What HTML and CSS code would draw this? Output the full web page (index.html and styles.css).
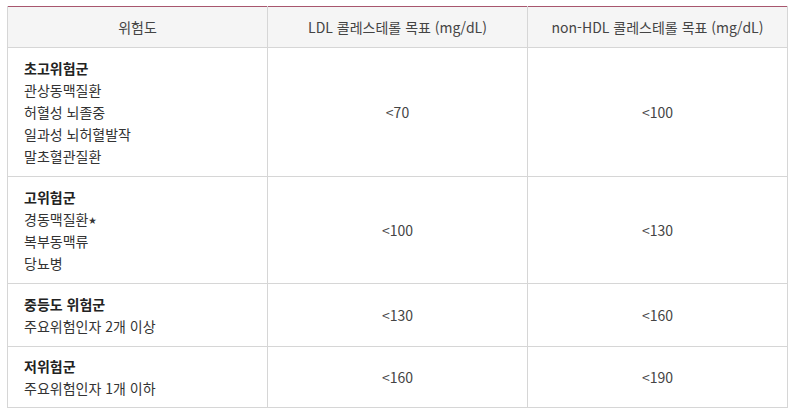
FILE: index.html
```html
<!DOCTYPE html>
<html lang="ko">
<head>
<meta charset="utf-8">
<link rel="stylesheet" href="styles.css">
</head>
<body>
<table class="risk-table">
  <thead>
    <tr>
      <th>위험도</th>
      <th>LDL 콜레스테롤 목표 (mg/dL)</th>
      <th>non-HDL 콜레스테롤 목표 (mg/dL)</th>
    </tr>
  </thead>
  <tbody>
    <tr>
      <td class="label">
        <div class="ln title">초고위험군</div>
        <div class="ln">관상동맥질환</div>
        <div class="ln">허혈성 뇌졸중</div>
        <div class="ln">일과성 뇌허혈발작</div>
        <div class="ln">말초혈관질환</div>
      </td>
      <td class="val">&lt;70</td>
      <td class="val">&lt;100</td>
    </tr>
    <tr>
      <td class="label">
        <div class="ln title">고위험군</div>
        <div class="ln">경동맥질환<span class="star">★</span></div>
        <div class="ln">복부동맥류</div>
        <div class="ln">당뇨병</div>
      </td>
      <td class="val">&lt;100</td>
      <td class="val">&lt;130</td>
    </tr>
    <tr>
      <td class="label">
        <div class="ln title">중등도 위험군</div>
        <div class="ln">주요위험인자 2개 이상</div>
      </td>
      <td class="val">&lt;130</td>
      <td class="val">&lt;160</td>
    </tr>
    <tr class="last">
      <td class="label">
        <div class="ln title">저위험군</div>
        <div class="ln">주요위험인자 1개 이하</div>
      </td>
      <td class="val">&lt;160</td>
      <td class="val">&lt;190</td>
    </tr>
  </tbody>
</table>
</body>
</html>
```

FILE: styles.css
```css
html, body {
  margin: 0;
  background: #fff;
}
body {
  padding: 6px 0 0 7px;
  font-family: "Noto Sans CJK KR", "Noto Sans", sans-serif;
  font-size: 14px;
  color: #333;
}
.risk-table {
  width: 781px;
  border-collapse: collapse;
  table-layout: fixed;
  border-top: 1px solid #a8566e;
}
.risk-table th {
  height: 40px;
  padding: 0;
  background: #f5f5f5;
  font-weight: normal;
  color: #444;
  text-align: center;
  vertical-align: middle;
  border: 1px solid #d6d6d6;
  border-top: none;
  line-height: 20px;
}
.risk-table td {
  border: 1px solid #d6d6d6;
  padding: 9px 0 9px 16px;
  line-height: 20px;
  vertical-align: middle;
}
.risk-table tr.last td {
  padding-top: 8px;
  padding-bottom: 8px;
}
.risk-table td.val {
  text-align: center;
  padding-left: 0;
  color: #444;
}
.ln {
  height: 22px;
  line-height: 22px;
  overflow: visible;
  white-space: nowrap;
}
.ln.title {
  font-weight: bold;
  color: #222;
}
.star {
  font-size: 8px;
  line-height: 0;
  vertical-align: 2px;
}
```
